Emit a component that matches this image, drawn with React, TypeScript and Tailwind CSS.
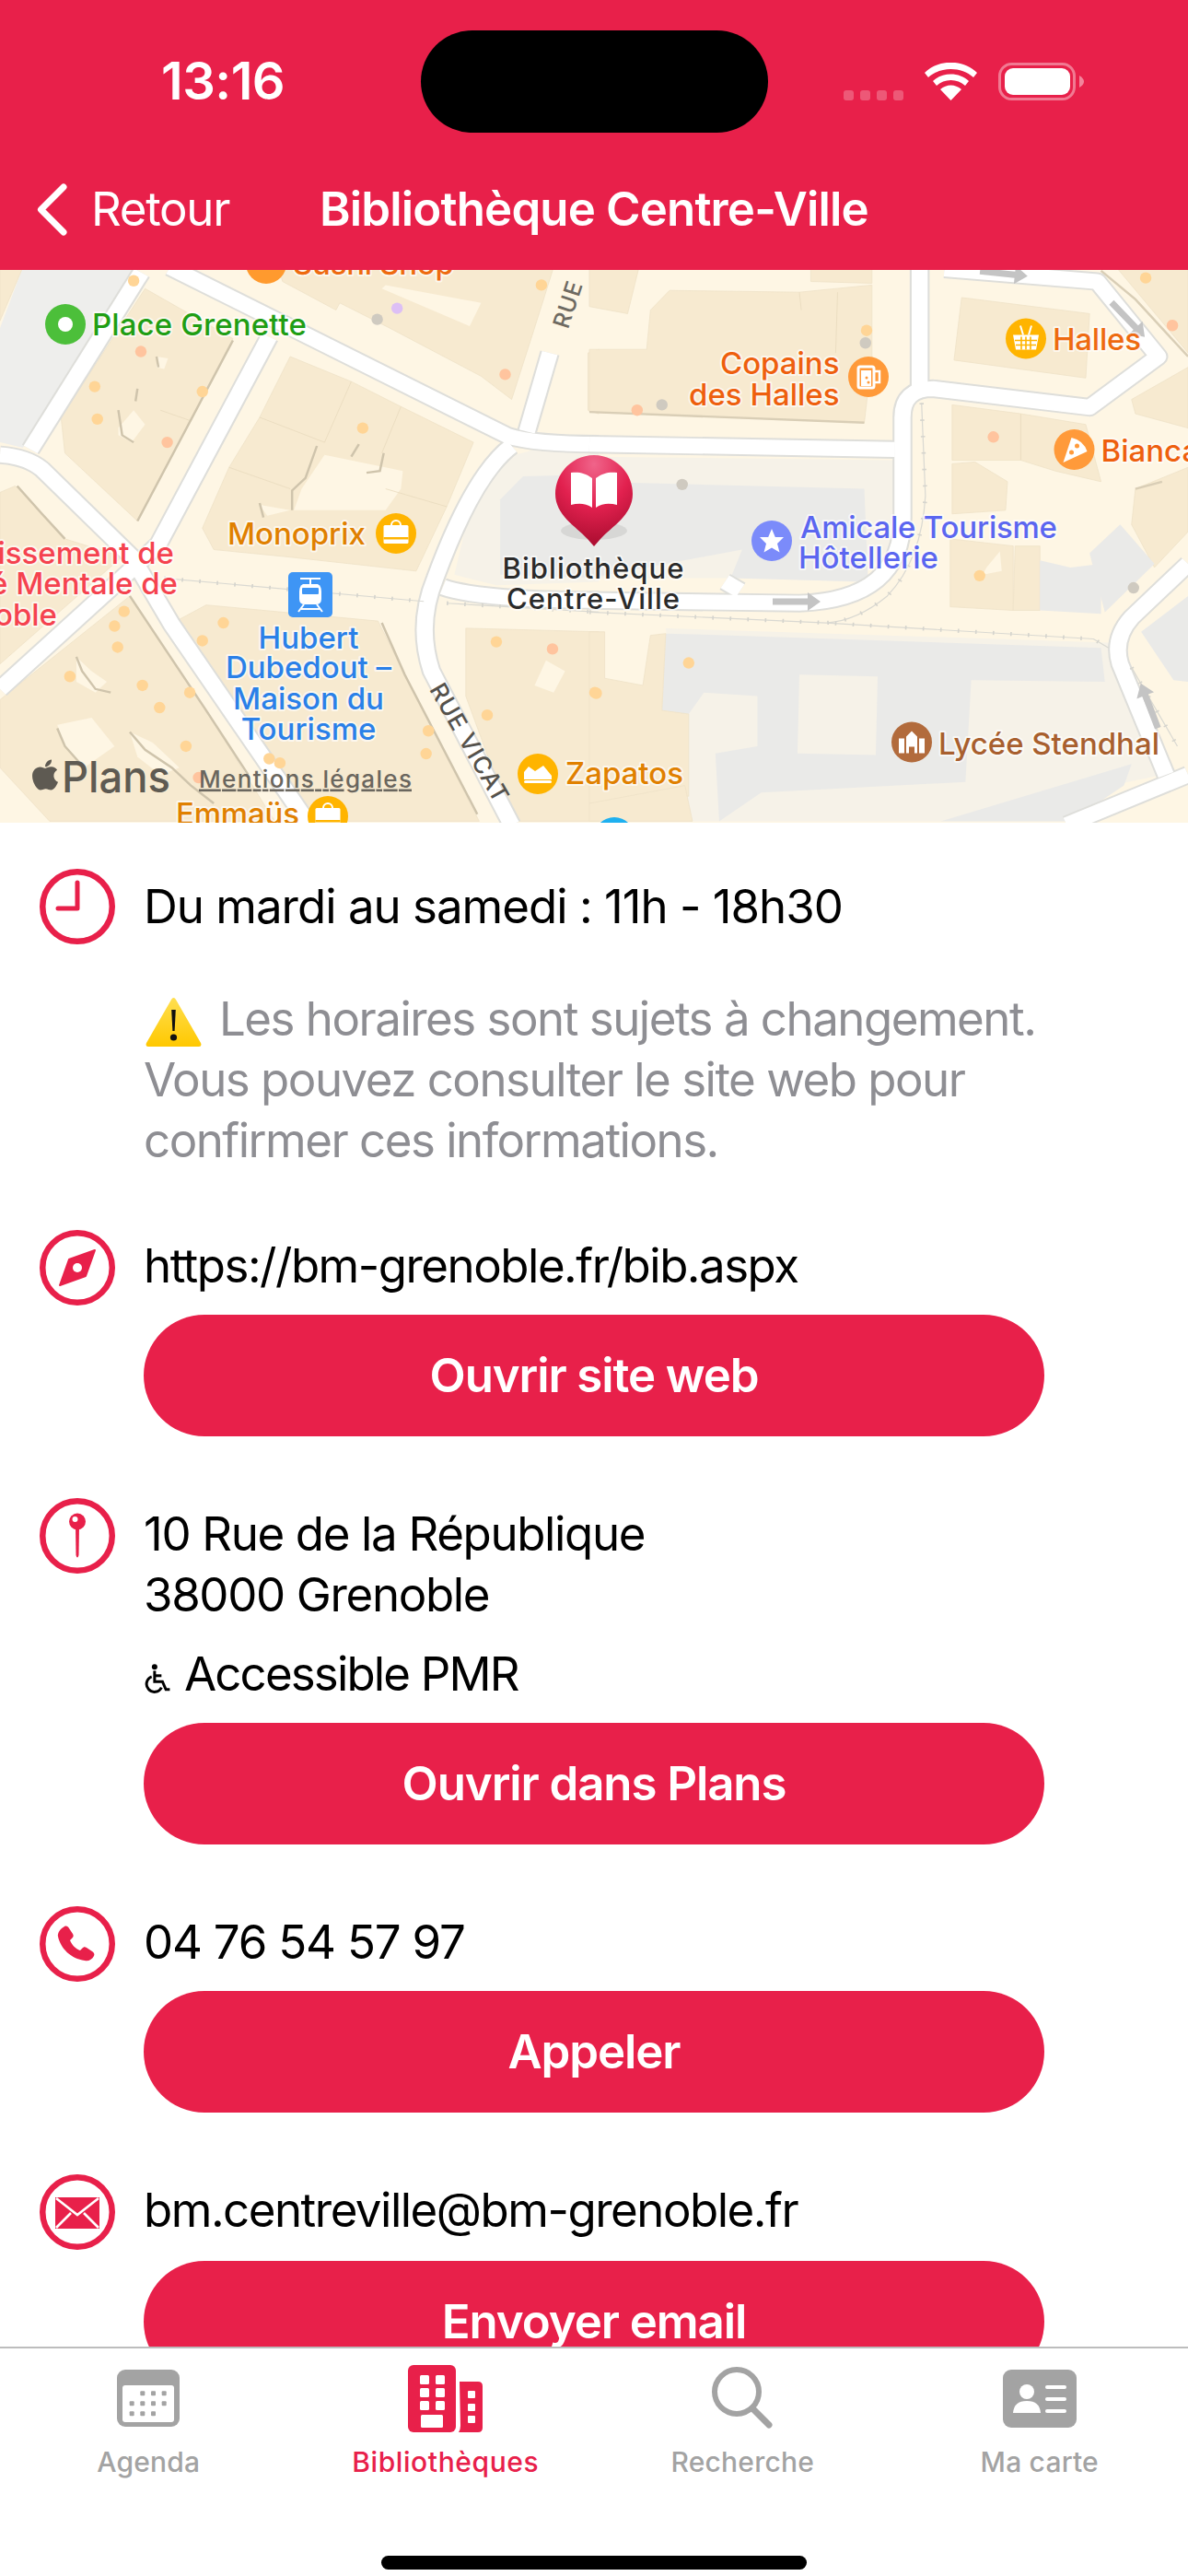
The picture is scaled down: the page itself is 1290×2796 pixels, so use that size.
import type { ReactNode } from 'react';
import { FaApple } from 'react-icons/fa';

// map traced in two panels, coordinates are the ones read off the zoomed crops
const LEFT = 'translate(0,-3) scale(0.4146,0.388)';
const RIGHT = 'translate(640,-3) scale(0.4146,0.388)';

const BLOCK = '#F7EAD0';
const LIGHT = '#F6F2E8';
const GREY = '#EAEAE8';
const CREAM = '#FEF6E4';

const leftAreas: [string, string][] = [
  ['60,0 350,0 60,505 0,490 0,170', '#EEEEEC'],
  ['1190,860 1230,680 1300,540 1400,510 1568,510 1568,880 1300,890', LIGHT],
  ['1310,650 1370,585 1568,580 1568,870 1310,860', GREY],
  ['0,0 60,0 0,150', BLOCK],
  ['380,60 610,200 360,710 170,520 160,420', BLOCK],
  ['410,250 440,255 430,285 410,280', CREAM],
  ['310,450 350,400 380,440 345,490 310,470', CREAM],
  ['760,250 920,320 1050,390 1240,490 1170,670 1090,850 920,830 750,810 560,790 530,730 600,560 680,420', BLOCK],
  ['850,525 1055,570 1050,620 1010,680 770,680 790,620', CREAM],
  ['680,665 760,680 700,695', CREAM],
  ['730,0 1450,0 1400,170 1340,370 1260,305 1020,170 890,100 880,120 740,40', BLOCK],
  ['1010,50 1260,100 1230,165 1000,60', CREAM],
  ['1540,240 1568,230 1568,410 1540,400', BLOCK],
  ['0,630 40,612 110,690 170,760 320,810 0,1110', BLOCK],
  ['340,920 440,1080 540,1240 690,1500 720,1550 130,1550 0,1400 0,1210', BLOCK],
  ['470,985 540,945 990,990 1060,1140 1255,1550 800,1550', BLOCK],
  ['1220,1010 1568,1020 1568,1550 1340,1550 1220,1200', BLOCK],
  ['1430,1100 1480,1130 1450,1190 1400,1170', CREAM],
  ['200,1090 240,1130 280,1160 250,1190 200,1160', CREAM],
  ['150,1280 240,1260 300,1340 220,1400 170,1340', CREAM],
  ['340,1300 400,1330 470,1400 420,1420 360,1370', CREAM],
];

const rightAreas: [string, string][] = [
  ['200,1010 1360,1050 1500,1420 920,1550 260,1550', LIGHT],
  ['0,530 800,540 790,780 700,880 430,870 0,870', LIGHT],
  ['0,600 720,620 730,880 370,870 400,790 0,870', GREY],
  ['0,0 130,0 100,130 0,110', BLOCK],
  ['0,230 150,230 160,120 210,65 550,70 740,50 740,250 720,435 0,405', BLOCK],
  ['580,0 740,0 740,45 580,40', BLOCK],
  ['975,85 1310,130 1300,310 955,260', BLOCK],
  ['950,385 1130,410 1300,440 1340,600 1220,570 1130,540 950,540', BLOCK],
  ['950,550 1010,545 1095,600 1090,680 950,690', BLOCK],
  ['945,760 1110,780 1110,960 945,950', BLOCK],
  ['1040,840 1075,795 1080,850 1030,860', CREAM],
  ['1115,780 1180,780 1180,960 1110,960', BLOCK],
  ['1420,370 1568,280 1568,450 1430,410', BLOCK],
  ['1430,620 1568,560 1568,740 1480,840 1420,720', BLOCK],
  ['1380,0 1568,0 1568,240', BLOCK],
  ['1180,820 1260,840 1340,830 1340,970 1180,960', GREY],
  ['1310,800 1390,720 1480,830 1350,965', GREY],
  ['200,1025 370,1030 1340,1065 1350,1160 1000,1155 985,1440 450,1470 340,1550 330,1360 440,1340 440,1200 300,1190 260,1250 190,1240', GREY],
  ['550,1140 755,1145 750,1365 545,1360', LIGHT],
  ['920,1550 1420,1390 1400,1450 1260,1550', GREY],
  ['1445,1020 1568,920 1568,1160 1530,1155', GREY],
  ['0,1020 40,1020 40,1150 140,1170 160,1030 200,1025 190,1240 260,1250 260,1480 0,1500', BLOCK],
  ['0,1500 250,1450 270,1550 0,1550', BLOCK],
];

const leftRoads = [
  'M445 0 L1330 472 Q1400 495 1568 495',
  'M370 15 L80 510',
  'M705 195 L415 775 L345 845 L0 1180',
  'M0 525 Q70 530 110 565 L345 810 L450 1000 L810 1560',
  'M1340 500 Q1240 580 1140 870 Q1090 1000 1130 1130 L1340 1560',
  'M1160 895 Q1250 930 1568 932',
  'M1440 240 L1380 460',
];

const rightRoads = [
  'M0 495 L800 510',
  'M0 932 L550 940 Q820 930 820 700 L820 420 Q820 340 900 340 L1310 392 L1490 250 L1330 40 L930 5',
  'M865 0 L865 340',
  'M1568 830 L1420 980 Q1370 1040 1390 1110 L1510 1420',
  'M1568 1420 L1250 1560',
  'M355 880 L395 905',
];

const rails = {
  left: 'M430 870 L1110 935 M1170 940 L1568 965',
  right: 'M0 965 L620 995 L1320 1040 L1360 1065 M870 380 L880 640 Q870 820 780 920 Q700 990 620 995 M1420 1120 L1540 1340',
};

const shadows = {
  left: 'M610 205 L360 710 M340 920 L440 1080 L540 1240 L650 1420 M1000 995 L1060 1140 L1250 1530 M45 612 L110 690 L170 760 M200 1090 L215 1130 L250 1180 L290 1190 M150 1290 L170 1340 L220 1400 M340 1300 L380 1350 L450 1400 L500 1450 L560 1500 M410 250 L415 280 M360 340 L355 375 M310 400 L320 470 L350 490 M680 660 L690 700 M830 500 L800 590 L765 625 L765 680 M940 495 L920 530 M1005 520 L995 570 L960 575',
  right: 'M1340 10 L1430 90 L1568 250 M0 405 L720 435 M1430 620 L1500 600',
};

const seams = {
  left: 'M680 420 L850 490 M600 560 L760 620 M920 320 L850 490 M1050 390 L1000 520 M1010 620 L1170 670 M420 400 L500 430',
  right: 'M550 70 L555 120 M650 70 L645 240 M1130 410 L1130 540',
};

const ORANGE = '#FFD596';
const SALMON = '#FFC49E';
const DOTGREY = '#CFCAC0';
const leftDots: [number, number, string][] = [
  [350, 38, ORANGE], [248, 334, ORANGE], [530, 348, ORANGE], [255, 425, ORANGE], [950, 450, ORANGE], [1418, 50, ORANGE],
  [325, 963, ORANGE], [300, 1004, ORANGE], [308, 1063, ORANGE], [585, 995, ORANGE], [530, 1045, ORANGE], [183, 1145, ORANGE],
  [373, 1170, ORANGE], [497, 1190, ORANGE], [418, 1232, ORANGE], [487, 1340, ORANGE], [705, 1375, ORANGE], [733, 1387, ORANGE],
  [1300, 1048, ORANGE], [1122, 1297, ORANGE], [1116, 1361, ORANGE], [1276, 1253, ORANGE], [1558, 1190, ORANGE],
  [369, 236, SALMON], [438, 490, SALMON], [1323, 300, SALMON], [1447, 1068, SALMON], [520, 1428, SALMON],
  [1040, 115, '#DDBFF5'], [988, 146, DOTGREY],
];
const rightDots: [number, number, string][] = [
  [726, 177, ORANGE], [723, 212, DOTGREY], [125, 400, SALMON], [190, 385, DOTGREY], [1457, 30, ORANGE], [1527, 163, SALMON],
  [1058, 475, SALMON], [243, 608, DOTGREY], [1022, 863, ORANGE], [1425, 897, DOTGREY], [260, 1107, ORANGE], [18, 1192, ORANGE],
];

function Arrow({ x, y, angle, color = '#C4C4C4' }: { x: number; y: number; angle: number; color?: string }) {
  return (
    <g transform={`translate(${x} ${y}) rotate(${angle})`} fill={color}>
      <path d="M-26 -3.5 H12 V-10 L26 0 L12 10 V3.5 H-26 Z" />
    </g>
  );
}

function Label({ x, y, size = 33, fill, anchor = 'start', width, children }: {
  x: number; y: number; size?: number; fill: string; anchor?: 'start' | 'middle' | 'end'; width?: number; children: ReactNode;
}) {
  return (
    <text
      x={x}
      y={y}
      fontSize={size}
      fontWeight={500}
      fill={fill}
      textAnchor={anchor}
      stroke="#FFFFFF"
      strokeOpacity={0.65}
      strokeWidth={4}
      paintOrder="stroke"
      strokeLinejoin="round"
      textLength={width}
      lengthAdjust={width ? 'spacing' : undefined}
    >
      {children}
    </text>
  );
}

function Poi({ x, y, color, children }: { x: number; y: number; color: string; children: ReactNode }) {
  return (
    <g transform={`translate(${x} ${y})`}>
      <circle r={22} fill={color} />
      {children}
    </g>
  );
}

function BagGlyph({ color }: { color: string }) {
  return (
    <g>
      <path d="M-5 -9 a5 5 0 0 1 10 0" fill="none" stroke="#fff" strokeWidth={2} />
      <rect x={-13.5} y={-9} width={27} height={20} rx={1.5} fill="#fff" />
      <rect x={-13.5} y={4} width={27} height={2.5} fill={color} />
    </g>
  );
}

function MapView() {
  return (
    <svg viewBox="0 0 1290 600" className="block h-[600px] w-[1290px]">
      <rect width={1290} height={600} fill={CREAM} />
      <g transform={LEFT}>
        {leftAreas.map(([points, fill], i) => (
          <polygon key={i} points={points} fill={fill} stroke="#EFE2C8" strokeWidth={fill === BLOCK ? 2 : 0} strokeLinejoin="round" />
        ))}
        <path d={seams.left} fill="none" stroke="#E9DBBE" strokeWidth={2} />
        <path d={shadows.left} fill="none" stroke="#CFC4AC" strokeWidth={6} />
      </g>
      <g transform={RIGHT}>
        {rightAreas.map(([points, fill], i) => (
          <polygon key={i} points={points} fill={fill} stroke="#EFE2C8" strokeWidth={fill === BLOCK ? 2 : 0} strokeLinejoin="round" />
        ))}
        <path d={seams.right} fill="none" stroke="#E9DBBE" strokeWidth={2} />
        <path d={shadows.right} fill="none" stroke="#D9CEB6" strokeWidth={6} />
      </g>

      <g transform={LEFT} fill="none" strokeLinejoin="round">
        <g stroke="#DEDEDA" strokeWidth={52}>{leftRoads.map((d) => <path key={d} d={d} />)}</g>
        <g stroke="#FFFFFF" strokeWidth={42}>{leftRoads.map((d) => <path key={d} d={d} />)}</g>
        <path d={rails.left} stroke="#DAD9D2" strokeWidth={3} />
        <path d={rails.left} stroke="#D5D4CD" strokeWidth={11} strokeDasharray="4 42" />
      </g>
      <g transform={RIGHT} fill="none" strokeLinejoin="round">
        <g stroke="#DEDEDA" strokeWidth={52}>{rightRoads.map((d) => <path key={d} d={d} />)}</g>
        <g stroke="#FFFFFF" strokeWidth={42}>{rightRoads.map((d) => <path key={d} d={d} />)}</g>
        <path d={rails.right} stroke="#DAD9D2" strokeWidth={3} />
        <path d={rails.right} stroke="#D5D4CD" strokeWidth={11} strokeDasharray="4 42" />
      </g>

      <g transform={LEFT}>{leftDots.map(([cx, cy, c]) => <ellipse key={`${cx}-${cy}`} cx={cx} cy={cy} rx={15} ry={16} fill={c} />)}</g>
      <g transform={RIGHT}>{rightDots.map(([cx, cy, c]) => <ellipse key={`${cx}-${cy}`} cx={cx} cy={cy} rx={15} ry={16} fill={c} />)}</g>

      <Arrow x={865} y={360} angle={0} />
      <Arrow x={1090} y={4} angle={6} />
      <Arrow x={1225} y={54} angle={46} />
      <Arrow x={1248} y={473} angle={-111} />

      {/* street names */}
      <text transform="translate(625 40) rotate(-72)" fontSize={25} fontWeight={500} fill="#6E6A62" textAnchor="middle" letterSpacing={1}>RUE</text>
      <text transform="translate(502 518) rotate(60)" fontSize={26} fontWeight={500} fill="#55524C" textAnchor="middle" letterSpacing={1}>RUE VICAT</text>

      {/* places */}
      <circle cx={71} cy={59} r={22} fill="#4CBF3A" />
      <circle cx={71} cy={59} r={8} fill="#fff" />
      <Label x={100} y={71} fill="#1F9E14" width={233}>Place Grenette</Label>

      <Poi x={289} y={-7} color="#FF9A2E"><circle r={4} fill="#fff" /></Poi>
      <Label x={318} y={5} fill="#EE6A10" width={175}>Sushi Shop</Label>

      <Poi x={430} y={286} color="#FFB400"><BagGlyph color="#FFB400" /></Poi>
      <Label x={397} y={297.5} fill="#E08000" anchor="end">Monoprix</Label>

      <Label x={189} y={318.5} fill="#F5424F" anchor="end">Établissement de</Label>
      <Label x={193} y={351.5} fill="#F5424F" anchor="end">Santé Mentale de</Label>
      <Label x={62} y={385.5} fill="#F5424F" anchor="end">Grenoble</Label>

      <g transform="translate(0 -5)">
        <rect x={313} y={333} width={48} height={49} rx={5} fill="#3E95F5" />
        <g fill="none" stroke="#fff" strokeWidth={2}>
          <path d="M326 340 H348 M337 340 V346 M324 376 L330 368 M350 376 L344 368 M327 373 H347" />
        </g>
        <path d="M329 346 H345 Q349 348 349 354 V362 Q349 368 343 368 H331 Q325 368 325 362 V354 Q325 348 329 346 Z" fill="#fff" />
        <rect x={328} y={350} width={18} height={7} rx={1} fill="#3E95F5" />
      </g>

      <Label x={335} y={410.5} fill="#2A80E8" anchor="middle">Hubert</Label>
      <Label x={335} y={443} fill="#2A80E8" anchor="middle">Dubedout –</Label>
      <Label x={335} y={476.5} fill="#2A80E8" anchor="middle">Maison du</Label>
      <Label x={335} y={510} fill="#2A80E8" anchor="middle">Tourisme</Label>

      <FaApple x={30} y={529} size={38} color="#5E5A52" />
      <text x={67} y={567} fontSize={47} fontWeight={500} fill="#5E5A52" textLength={118} lengthAdjust="spacingAndGlyphs">Plans</text>
      <text x={216} y={561.5} fontSize={26} fontWeight={500} fill="#6A665E" textDecoration="underline" textLength={231}>Mentions légales</text>

      <Poi x={356} y={593} color="#FFB400"><BagGlyph color="#FFB400" /></Poi>
      <Label x={191} y={602} fill="#E08000" width={134}>Emmaüs</Label>

      <Poi x={584} y={547} color="#FFB400">
        <path d="M-15 -2 L-10 -8 L-3 -3 L6 -9 L15 2 V6 H-15 Z" fill="#fff" />
        <rect x={-15} y={7} width={30} height={3} rx={1.5} fill="#fff" />
      </Poi>
      <Label x={614} y={558} fill="#E08000" width={128}>Zapatos</Label>

      <circle cx={667} cy={616} r={22} fill="#1EB0F0" />

      <Label x={911.5} y={112.5} fill="#EE5F0E" anchor="end">Copains</Label>
      <Label x={911.5} y={146.5} fill="#EE5F0E" anchor="end">des Halles</Label>
      <Poi x={943} y={116} color="#FF9A3A">
        <rect x={-11} y={-11} width={17} height={23} rx={2} fill="none" stroke="#fff" strokeWidth={3} />
        <rect x={-8} y={-7} width={11} height={17} fill="#fff" />
        <path d="M7 -6 H12 V6 H7" fill="none" stroke="#fff" strokeWidth={2.5} />
        <circle cx={-2} cy={1} r={1.5} fill="#FF9A3A" />
        <circle cx={0} cy={6} r={1.5} fill="#FF9A3A" />
      </Poi>

      <Poi x={1114} y={74.5} color="#FFB400">
        <path d="M-6 -14 L-3 -4 M6 -14 L3 -4" stroke="#fff" strokeWidth={2} />
        <path d="M-14 -4 H14 L11 12 H-11 Z" fill="#fff" />
        <path d="M-12 2 H12 M-11 7 H11 M-5 -2 V12 M0 -2 V12 M5 -2 V12" stroke="#FFB400" strokeWidth={1.6} />
      </Poi>
      <Label x={1143} y={87} fill="#EE6A10" width={96}>Halles</Label>

      <Poi x={1166.5} y={195} color="#FF9A3A">
        <path d="M-12 14 L-3 -13 Q10 -10 14 2 Z" fill="#fff" />
        <circle cx={-3} cy={3} r={2.5} fill="#FF9A3A" />
        <circle cx={3} cy={-4} r={2.5} fill="#FF9A3A" />
      </Poi>
      <Label x={1195.5} y={208} fill="#EE5F0E">Bianca</Label>

      <Poi x={838} y={294} color="#7B8BFA">
        <polygon points="0,-13 3.8,-4 13,-4 6,3 8.5,12.5 0,7.5 -8.5,12.5 -6,3 -13,-4 -3.8,-4" fill="#fff" />
      </Poi>
      <Label x={869} y={290.5} fill="#5B66F0" width={279}>Amicale Tourisme</Label>
      <Label x={867} y={323.5} fill="#5B66F0" width={152}>Hôtellerie</Label>

      <Poi x={990} y={512.5} color="#B26B3C">
        <path d="M-6 12 V-6 L0 -12 L6 -6 V12 H3 V5 H-3 V12 Z" fill="#fff" />
        <path d="M-14 -4 H-8 V12 H-14 Z M8 -4 H14 V12 H8 Z" fill="#fff" />
      </Poi>
      <Label x={1019} y={525.5} fill="#A85F2E" width={240}>Lycée Stendhal</Label>

      {/* selected library */}
      <defs>
        <radialGradient id="pinFill" cx="50%" cy="10%" r="85%">
          <stop offset="0%" stopColor="#F0648A" />
          <stop offset="55%" stopColor="#E2214F" />
          <stop offset="100%" stopColor="#B00F33" />
        </radialGradient>
      </defs>
      <ellipse cx={645} cy={283} rx={36} ry={10} fill="#000" opacity={0.08} />
      <path d="M645 201 C668 201 687 220 687 243 C687 266 665 278 652 292 L645 300 L638 292 C625 278 603 266 603 243 C603 220 622 201 645 201 Z" fill="url(#pinFill)" />
      <path d="M643 226 C635 220 628 219 620 220 V255 C628 253 636 253 643 258 Z M647 226 C655 220 662 219 670 220 V255 C662 253 654 253 647 258 Z" fill="#fff" />
      <Label x={644} y={335} size={31} fill="#2A2A2A" anchor="middle" width={197}>Bibliothèque</Label>
      <Label x={644} y={368} size={31} fill="#2A2A2A" anchor="middle" width={188}>Centre-Ville</Label>
    </svg>
  );
}

function RingIcon({ children }: { children: ReactNode }) {
  return (
    <svg viewBox="0 0 82 82" className="h-[82px] w-[82px] shrink-0 text-[#E8204A]">
      <circle cx={41} cy={41} r={37.75} fill="none" stroke="currentColor" strokeWidth={6.5} />
      {children}
    </svg>
  );
}

function ClockIcon() {
  return (
    <RingIcon>
      <path d="M41 15 V43 H20" fill="none" stroke="currentColor" strokeWidth={5} strokeLinecap="round" strokeLinejoin="round" />
    </RingIcon>
  );
}

function CompassIcon() {
  return (
    <RingIcon>
      <path d="M60 22 L50 50 L22 60 L32 32 Z" fill="currentColor" stroke="currentColor" strokeWidth={2} strokeLinejoin="round" />
      <circle cx={41} cy={41} r={5} fill="#fff" />
    </RingIcon>
  );
}

function PinIcon() {
  return (
    <RingIcon>
      <circle cx={41} cy={25.5} r={9} fill="currentColor" />
      <circle cx={38.5} cy={23} r={3} fill="#fff" />
      <path d="M39 30 H43 L42.5 62 Q41 67 39.5 62 Z" fill="currentColor" />
    </RingIcon>
  );
}

function PhoneIcon() {
  return (
    <RingIcon>
      <path d="M27 22 c2-1 4 0 5 2 l4 6 c1 2 1 3-1 5 l-2 2 c2 5 6 9 11 11 l2-2 c2-2 3-2 5-1 l6 4 c2 1 3 3 2 5 c-2 4-6 6-10 5 C34 57 23 46 20 33 c-1-4 3-9 7-11 z" fill="currentColor" />
    </RingIcon>
  );
}

function MailIcon() {
  return (
    <RingIcon>
      <rect x={17} y={25} width={48} height={34} fill="currentColor" />
      <path d="M18 26 L41 44 L64 26 M18 58 L34 42 M64 58 L48 42" fill="none" stroke="#fff" strokeWidth={2.6} />
    </RingIcon>
  );
}

function WarningIcon() {
  return (
    <svg viewBox="0 0 61 54" className="-my-[6px] ml-[2px] mr-[19px] inline-block h-[54px] w-[61px] align-[-6px]">
      <defs>
        <linearGradient id="warnFill" x1="0" y1="0" x2="0" y2="1">
          <stop offset="0%" stopColor="#FFDF50" />
          <stop offset="100%" stopColor="#FFC800" />
        </linearGradient>
      </defs>
      <path d="M30.5 1 Q32 1 33 3 L60 50 Q61.5 54 58 54 H3 Q-0.5 54 1 50 L28 3 Q29 1 30.5 1 Z" fill="url(#warnFill)" />
      <path d="M28.2 14 H32.8 L31.6 37 H29.4 Z" fill="#111" />
      <circle cx={30.5} cy={44} r={3.6} fill="#111" />
    </svg>
  );
}

function WheelchairIcon() {
  return (
    <svg viewBox="0 0 28 30" className="-ml-[1px] mr-[15px] inline-block h-[32px] w-[30px] align-[-3px]" fill="none" stroke="#000" strokeWidth={2.8}>
      <circle cx={12} cy={3} r={2.8} fill="#000" stroke="none" />
      <path d="M12 7 V18 H20 L23.5 26 H27.5" />
      <path d="M12 12 H19" />
      <path d="M9 13 A8 8 0 1 0 19 24" />
    </svg>
  );
}

function ActionButton({ label }: { label: string }) {
  return (
    <button className="flex h-[132px] w-[978px] items-center justify-center rounded-full bg-[#E8204A] text-[51px] font-semibold tracking-[-1.1px] text-white">
      {label}
    </button>
  );
}

function InfoRow({ icon, children, className }: { icon: ReactNode; children: ReactNode; className?: string }) {
  return (
    <div className={`flex gap-[31px] pl-[43px] ${className ?? ''}`}>
      {icon}
      <div className="w-[1000px] pt-[6px] text-[51px] leading-[66px] tracking-[-1.5px] text-black">{children}</div>
    </div>
  );
}

function CalendarGlyph({ color }: { color: string }) {
  const dots = [[127, 127], [162, 127], [197, 127], [92, 160], [127, 160], [162, 160], [197, 160], [92, 193], [127, 193], [162, 193]];
  return (
    <svg viewBox="0 0 68 62" className="h-[62px] w-[68px]">
      <rect width={68} height={62} rx={9} fill={color} />
      <rect x={6} y={17} width={56} height={40} rx={3} fill="#fff" />
      {dots.map(([x, y]) => (
        <rect key={`${x}-${y}`} x={(x - 48) / 3 - 1} y={(y - 50) / 3 - 2.5} width={5} height={5} rx={1} fill={color} />
      ))}
    </svg>
  );
}

function BuildingGlyph({ color }: { color: string }) {
  const big = [[13, 11], [30, 11], [13, 25], [30, 25], [13, 39], [30, 39]];
  const small = [14, 28, 41];
  return (
    <svg viewBox="0 0 81 73" className="h-[73px] w-[81px]">
      <rect width={52} height={73} rx={6} fill={color} />
      {big.map(([x, y]) => <rect key={`${x}-${y}`} x={x} y={y} width={10} height={10} rx={1.5} fill="#fff" />)}
      <rect x={14} y={54} width={24} height={14} rx={1.5} fill="#fff" />
      <path d="M56 18 H76 Q81 18 81 23 V68 Q81 73 76 73 H55 Q57 70 57 66 Z" fill={color} />
      {small.map((y) => <rect key={y} x={65} y={y + 14} width={8} height={8} rx={1} fill="#fff" />)}
    </svg>
  );
}

function SearchGlyph({ color }: { color: string }) {
  return (
    <svg viewBox="0 0 67 68" className="h-[68px] w-[67px]" fill="none" stroke={color}>
      <circle cx={27} cy={27} r={24} strokeWidth={6} />
      <path d="M44 45 L62 63" strokeWidth={7} strokeLinecap="round" />
    </svg>
  );
}

function CardGlyph({ color }: { color: string }) {
  return (
    <svg viewBox="0 0 80 63" className="h-[63px] w-[80px]">
      <rect width={80} height={63} rx={9} fill={color} />
      <circle cx={26} cy={24} r={8} fill="#fff" />
      <path d="M11 47 Q12 34 26 34 Q40 34 41 47 Z" fill="#fff" />
      <rect x={46} y={17} width={23} height={4} rx={2} fill="#fff" />
      <rect x={46} y={30} width={23} height={4} rx={2} fill="#fff" />
      <rect x={46} y={43} width={23} height={4} rx={2} fill="#fff" />
    </svg>
  );
}

function TabItem({ label, active, children }: { label: string; active?: boolean; children: ReactNode }) {
  return (
    <div className={`flex w-[322.5px] flex-col items-center ${active ? 'text-[#E8204A]' : 'text-[#A3A3A3]'}`}>
      <div className="flex h-[74px] items-center justify-center">{children}</div>
      <span className={`mt-[14px] text-[30px] font-medium leading-[36px] ${active ? 'tracking-[0.6px]' : 'tracking-[0.2px]'}`}>{label}</span>
    </div>
  );
}

export default function App() {
  return (
    <div className="relative flex h-[2796px] w-[1290px] flex-col overflow-hidden bg-white font-['Inter',sans-serif]">
      <header className="h-[293px] shrink-0 bg-[#E8204A] text-white">
        <div className="flex items-center pt-[33px]">
          <div className="w-[457px] pl-[175px] text-[56px] font-semibold leading-[111px] tracking-[-0.5px]">13:16</div>
          <div className="h-[111px] w-[377px] rounded-full bg-black" />
          <svg viewBox="0 0 261 41" className="ml-[82px] h-[41px] w-[261px]">
            <g fill="#fff" opacity={0.25}>
              <rect x={0} y={30} width={11} height={11} rx={3} />
              <rect x={18} y={30} width={11} height={11} rx={3} />
              <rect x={36} y={30} width={11} height={11} rx={3} />
              <rect x={54} y={30} width={11} height={11} rx={3} />
            </g>
            <path d="M88 11 C103 -4 130 -4 145 11 L141 16 C128 4 105 4 92 16 Z M97 20 C107 10 126 10 136 20 L132 25 C124 17 109 17 101 25 Z M105 29 C112 23 121 23 128 29 L116.5 41 Z" fill="#fff" />
            <rect x={169.5} y={1.5} width={81} height={38} rx={13} fill="none" stroke="#fff" strokeOpacity={0.4} strokeWidth={3} />
            <rect x={175} y={6} width={71} height={29} rx={9} fill="#fff" />
            <path d="M256 14 Q261 17 261 20.5 Q261 24 256 27 Z" fill="#fff" opacity={0.45} />
          </svg>
        </div>
        <nav className="mt-[32px] flex h-[102px] items-center pl-[40px]">
          <svg viewBox="0 0 33 57" className="h-[57px] w-[33px]" fill="none" stroke="#fff" strokeWidth={7} strokeLinecap="round" strokeLinejoin="round">
            <path d="M29 4 L4.5 28.5 L29 53" />
          </svg>
          <span className="ml-[26px] w-[248px] text-[51px] tracking-[-1.3px]">Retour</span>
          <h1 className="text-[51px] font-semibold tracking-[-0.85px]">Bibliothèque Centre-Ville</h1>
        </nav>
      </header>

      <div className="h-[600px] shrink-0 overflow-hidden">
        <MapView />
      </div>

      <main className="flex-1 overflow-hidden">
        <InfoRow icon={<ClockIcon />} className="mt-[50px]">
          <p className="pt-[2px] tracking-[-1px]">Du mardi au samedi : 11h - 18h30</p>
          <p className="mt-[56px] text-[#8E8E93]">
            <WarningIcon />
            Les horaires sont sujets à changement.
            <br />
            Vous pouvez consulter le site web pour
            <br />
            confirmer ces informations.
          </p>
        </InfoRow>

        <InfoRow icon={<CompassIcon />} className="mt-[64px]">
          <p>https://bm-grenoble.fr/bib.aspx</p>
          <div className="mt-[20px]"><ActionButton label="Ouvrir site web" /></div>
        </InfoRow>

        <InfoRow icon={<PinIcon />} className="mt-[67px]">
          <p className="tracking-[-1.35px]">
            10 Rue de la République
            <br />
            38000 Grenoble
          </p>
          <p className="mt-[20px] tracking-[-1.85px]">
            <WheelchairIcon />
            Accessible PMR
          </p>
          <div className="mt-[20px]"><ActionButton label="Ouvrir dans Plans" /></div>
        </InfoRow>

        <InfoRow icon={<PhoneIcon />} className="mt-[67px]">
          <p className="tracking-[-1.2px]">04 76 54 57 97</p>
          <div className="mt-[20px]"><ActionButton label="Appeler" /></div>
        </InfoRow>

        <InfoRow icon={<MailIcon />} className="mt-[67px]">
          <p>bm.centreville@bm-grenoble.fr</p>
          <div className="mt-[22px]"><ActionButton label="Envoyer email" /></div>
        </InfoRow>
      </main>

      <footer className="absolute inset-x-0 bottom-0 h-[249px] border-t-2 border-[#BDBDBD] bg-white">
        <div className="flex pt-[17px]">
          <TabItem label="Agenda"><CalendarGlyph color="#A3A3A3" /></TabItem>
          <TabItem label="Bibliothèques" active><BuildingGlyph color="#E8204A" /></TabItem>
          <TabItem label="Recherche"><SearchGlyph color="#A3A3A3" /></TabItem>
          <TabItem label="Ma carte"><CardGlyph color="#A3A3A3" /></TabItem>
        </div>
        <div className="mx-auto mt-[84px] h-[15px] w-[462px] rounded-full bg-black" />
      </footer>
    </div>
  );
}
